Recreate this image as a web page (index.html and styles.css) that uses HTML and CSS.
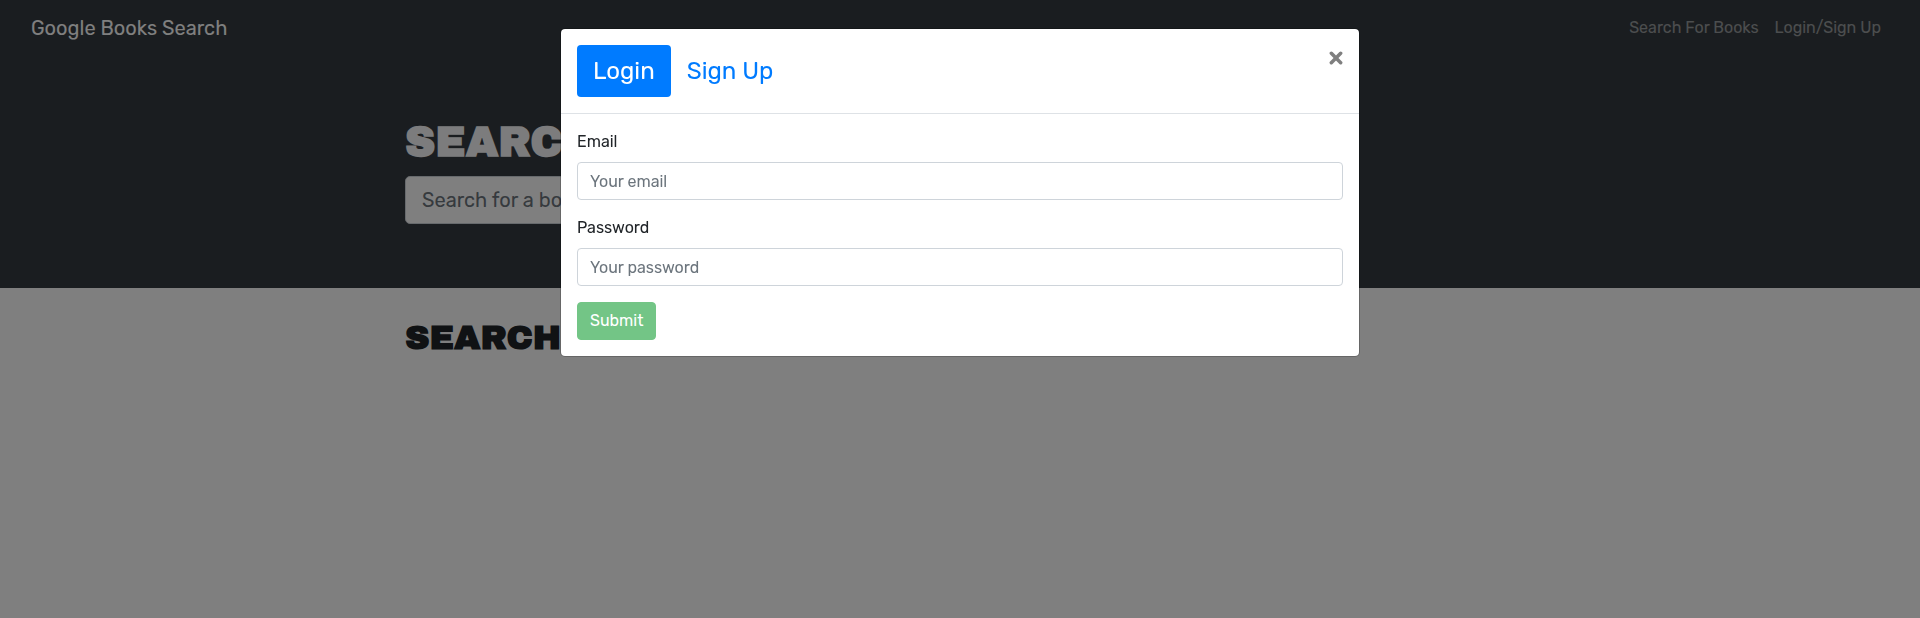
FILE: index.html
```html
<!DOCTYPE html>
<html lang="en">
<head>
  <meta charset="utf-8">
  <meta name="viewport" content="width=device-width, initial-scale=1">
  <title>Google Books Search</title>
  <link rel="stylesheet" href="styles.css">
</head>
<body>
  <nav class="navbar">
    <a class="brand" href="#">Google Books Search</a>
    <div class="nav-links">
      <a class="nav-link" href="#">Search For Books</a>
      <a class="nav-link" href="#">Login/Sign Up</a>
    </div>
  </nav>
  <header class="hero">
    <div class="container">
      <h1 class="hero-title">Search</h1>
      <form class="search-form">
        <input class="search-input" type="text" aria-label="Search for a book" placeholder="Search for a book">
      </form>
    </div>
  </header>
  <main class="container results">
    <h2 class="results-title">Search</h2>
  </main>

  <div class="backdrop">
    <section class="modal" role="dialog" aria-modal="true" aria-label="Login">
      <div class="modal-header">
        <div class="tabs">
          <a class="tab tab-active" href="#login">Login</a>
          <a class="tab" href="#signup">Sign Up</a>
        </div>
        <button class="close" type="button" aria-label="Close">
          <svg class="close-icon" viewBox="0 0 12 12" aria-hidden="true"><path d="M2 2 10 10M10 2 2 10"/></svg>
        </button>
      </div>
      <form class="modal-body">
        <div class="field">
          <label for="email">Email</label>
          <input class="control" id="email" type="email" placeholder="Your email">
        </div>
        <div class="field">
          <label for="password">Password</label>
          <input class="control" id="password" type="password" placeholder="Your password">
        </div>
        <button class="submit" type="submit" disabled>Submit</button>
      </form>
    </section>
  </div>
</body>
</html>
```
FILE: styles.css
```css
*, *::before, *::after { box-sizing: border-box; }

body {
  margin: 0;
  background: #fff;
  color: #212529;
  font: 400 16px/24px Rubik, Roboto, "Liberation Sans", sans-serif;
}

a { text-decoration: none; }
input, button { font: inherit; margin: 0; }

.navbar {
  display: flex;
  align-items: center;
  justify-content: space-between;
  min-height: 56px;
  padding: 8px 31px;
  background: #343a40;
}
.brand { color: #fff; font-size: 20px; line-height: 30px; }
.nav-links { display: flex; }
.nav-link { padding: 8px; color: rgba(255, 255, 255, .5); }

.container {
  width: 100%;
  max-width: 1140px;
  margin: 0 auto;
  padding: 0 15px;
}

.hero { padding: 64px 0; background: #343a40; color: #f8f9fa; }
.hero-title, .results-title {
  margin: 0 0 12px;
  font-family: "Archivo Black", "DejaVu Sans", sans-serif;
  font-weight: 700;
  text-transform: uppercase;
}
.hero-title { font-size: 42px; line-height: 44px; }
.search-form { display: flex; }
.search-input {
  width: 66%;
  height: 48px;
  padding: 8px 16px;
  border: 1px solid #ced4da;
  border-radius: 5px;
  background: #fff;
  font-size: 20px;
}
input::placeholder { color: #6c757d; opacity: 1; }

.results { padding-top: 32px; }
.results-title { font-size: 34px; line-height: 36px; }

.backdrop {
  position: fixed;
  inset: 0;
  padding: 28px 16px;
  overflow: auto;
  background: rgba(0, 0, 0, .5);
}
.modal {
  max-width: 800px;
  margin: 0 auto;
  border: 1px solid rgba(0, 0, 0, .2);
  border-radius: 5px;
  background: #fff;
  background-clip: padding-box;
}
.modal-header {
  display: flex;
  align-items: flex-start;
  justify-content: space-between;
  padding: 16px;
  border-bottom: 1px solid #dee2e6;
}
.tabs { display: flex; font-size: 24px; line-height: 36px; }
.tab { padding: 8px 16px; border-radius: 4px; color: #007bff; }
.tab-active { background: #007bff; color: #fff; }
.close {
  display: flex;
  padding: 6px 0;
  border: 0;
  background: none;
}
.close-icon {
  width: 14px;
  height: 14px;
  fill: none;
  stroke: #7f7f7f;
  stroke-width: 3;
  stroke-linecap: round;
}

.modal-body { padding: 16px; }
.field { margin-bottom: 16px; }
.field label { display: block; margin-bottom: 8px; }
.control {
  display: block;
  width: 100%;
  height: 38px;
  padding: 6px 12px;
  border: 1px solid #ced4da;
  border-radius: 4px;
  background: #fff;
}
.submit {
  display: block;
  height: 38px;
  padding: 6px 12px;
  border: 1px solid #28a745;
  border-radius: 4px;
  background: #28a745;
  color: #fff;
  opacity: .65;
}
```
